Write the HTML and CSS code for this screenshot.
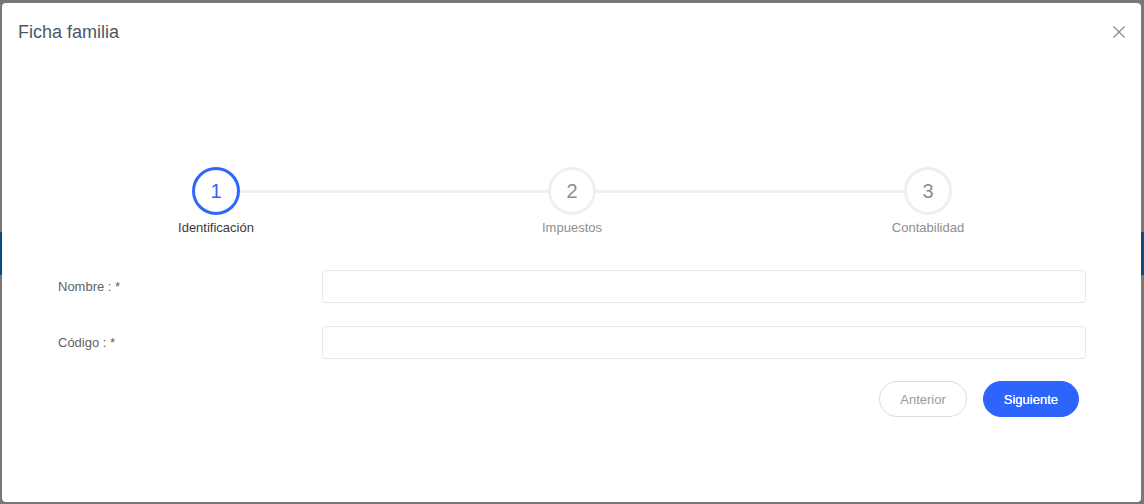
FILE: index.html
```html
<!DOCTYPE html>
<html lang="es">
<head>
<meta charset="utf-8">
<title>Ficha familia</title>
<link rel="stylesheet" href="styles.css">
</head>
<body>
<div class="overlay">
  <div class="modal">
    <div class="modal-header">
      <h2 class="modal-title">Ficha familia</h2>
      <button class="close-btn" aria-label="Cerrar">
        <svg width="12" height="12" viewBox="0 0 12 12"><path d="M0.5 0.5 L11.5 11.5 M11.5 0.5 L0.5 11.5" stroke="#8a8a8a" stroke-width="1.3" fill="none"/></svg>
      </button>
    </div>
    <div class="steps">
      <div class="step-circle active">1</div>
      <div class="step-line"></div>
      <div class="step-circle">2</div>
      <div class="step-line"></div>
      <div class="step-circle">3</div>
      <div class="step-label active">Identificación</div>
      <div class="step-label col3">Impuestos</div>
      <div class="step-label col5">Contabilidad</div>
    </div>
    <div class="form">
      <label class="form-label">Nombre : *</label>
      <input class="form-input" type="text">
      <label class="form-label">Código : *</label>
      <input class="form-input" type="text">
    </div>
    <div class="actions">
      <button class="btn btn-default">Anterior</button>
      <button class="btn btn-primary">Siguiente</button>
    </div>
  </div>
</div>
</body>
</html>
```

FILE: styles.css
```css
html, body {
  margin: 0;
  padding: 0;
}
body {
  width: 1144px;
  height: 504px;
  overflow: hidden;
  font-family: "Liberation Sans", Arial, sans-serif;
  background: linear-gradient(to bottom, #777777 0, #777777 232px, #0d4a7f 232px, #0d4a7f 275px, #777777 275px, #777777 100%);
}
.overlay {
  padding: 3px 3px 2px 2px;
}
.modal {
  width: 1139px;
  height: 499px;
  background: #ffffff;
  border-radius: 4px;
  display: flex;
  flex-direction: column;
}
.modal-header {
  display: flex;
  justify-content: space-between;
  align-items: center;
  padding: 17px 16px 0 16px;
  height: 24px;
}
.modal-title {
  margin: 0;
  font-size: 18px;
  line-height: 24px;
  font-weight: normal;
  color: #4a5866;
}
.close-btn {
  border: none;
  background: none;
  padding: 0;
  width: 12px;
  height: 12px;
  display: flex;
  cursor: pointer;
}
.steps {
  margin-top: 123px;
  padding: 0 189px 0 190px;
  display: grid;
  grid-template-columns: 48px 1fr 48px 1fr 48px;
  grid-template-rows: 48px 18px;
  row-gap: 4px;
}
.step-circle {
  box-sizing: border-box;
  width: 48px;
  height: 48px;
  border-radius: 50%;
  border: 3px solid #efefef;
  display: flex;
  align-items: center;
  justify-content: center;
  font-size: 20px;
  color: #8e8e8e;
  background: #fff;
}
.step-circle.active {
  border-color: #2f66fb;
  color: #2f66fb;
}
.step-line {
  align-self: center;
  height: 3px;
  background: #efefef;
}
.step-label {
  grid-row: 2;
  grid-column: 1;
  margin: 0 -70px;
  text-align: center;
  font-size: 13px;
  line-height: 18px;
  color: #8e8e8e;
  white-space: nowrap;
}
.step-label.active {
  color: #3a3a3a;
}
.step-label.col3 {
  grid-column: 3;
}
.step-label.col5 {
  grid-column: 5;
}
.form {
  margin-top: 33px;
  padding: 0 55px 0 56px;
  display: grid;
  grid-template-columns: 264px 1fr;
  grid-auto-rows: 33px;
  row-gap: 23px;
  align-items: center;
}
.form-label {
  font-size: 13px;
  color: #606266;
}
.form-input {
  box-sizing: border-box;
  height: 33px;
  width: 100%;
  border: 1px solid #e4e7ed;
  border-radius: 4px;
  outline: none;
  padding: 0 10px;
  font-family: inherit;
  font-size: 13px;
}
.actions {
  margin-top: 22px;
  padding-right: 62px;
  display: flex;
  justify-content: flex-end;
  gap: 16px;
}
.btn {
  box-sizing: border-box;
  height: 36px;
  padding: 0 20px;
  border-radius: 18px;
  font-family: inherit;
  font-size: 13px;
  cursor: pointer;
}
.btn-default {
  background: #fff;
  border: 1px solid #dcdcdc;
  color: #9a9a9a;
}
.btn-primary {
  background: #2d64fb;
  border: 1px solid #2d64fb;
  color: #fff;
  text-shadow: 0 0 0.4px #fff;
}
```
